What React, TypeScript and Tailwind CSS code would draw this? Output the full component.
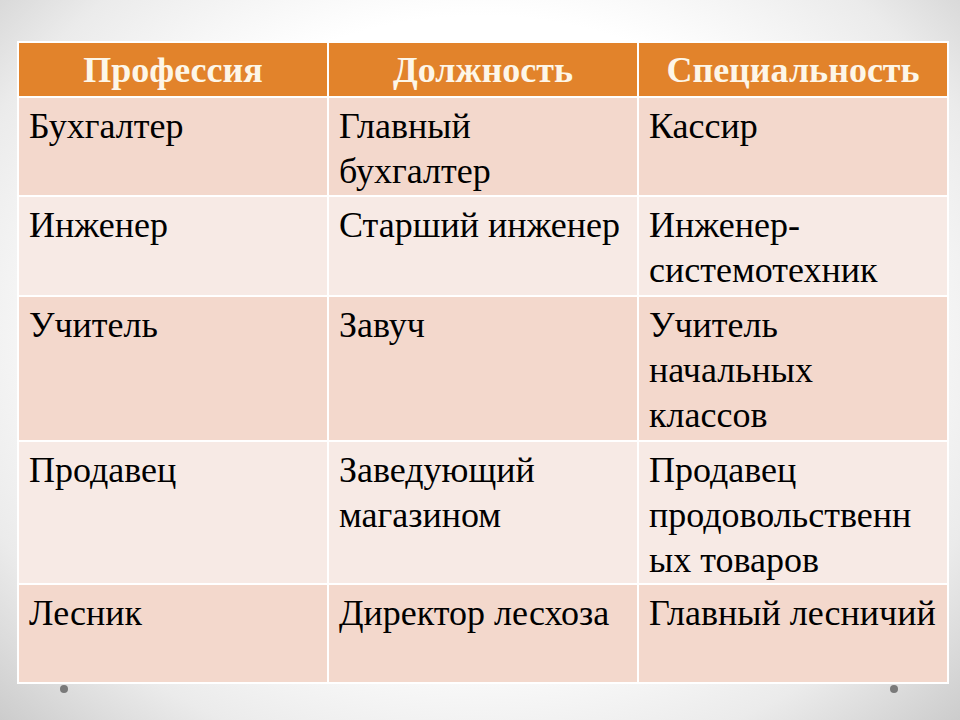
const rows: { cells: string[][]; h: number }[] = [
  { cells: [["Бухгалтер"], ["Главный", "бухгалтер"], ["Кассир"]], h: 99 },
  { cells: [["Инженер"], ["Старший инженер"], ["Инженер-", "системотехник"]], h: 100 },
  { cells: [["Учитель"], ["Завуч"], ["Учитель", "начальных", "классов"]], h: 145 },
  { cells: [["Продавец"], ["Заведующий", "магазином"], ["Продавец", "продовольственн", "ых товаров"]], h: 143 },
  { cells: [["Лесник"], ["Директор лесхоза"], ["Главный лесничий"]], h: 99 },
];

const headers = ["Профессия", "Должность", "Специальность"];

export default function App() {
  return (
    <div
      className="w-[960px] h-[720px] overflow-hidden pt-[41px] pl-[17px] bg-[radial-gradient(ellipse_at_50%_45%,#ffffff_55%,#ebebeb_80%,#cccccc_100%)]"
      style={{ fontFamily: '"Liberation Serif", "Times New Roman", serif' }}
    >
      <table className="border-collapse border-2 border-white w-[932px] table-fixed">
        <thead>
          <tr className="h-[55px] bg-[#e2832b]">
            {headers.map((h) => (
              <th key={h} className="border-2 border-white text-[#fdf6e8] text-[36px] leading-[40px] font-bold text-center align-middle p-0 pt-[1px]">
                {h}
              </th>
            ))}
          </tr>
        </thead>
        <tbody>
          {rows.map((r, i) => (
            <tr
              key={i}
              className={i % 2 === 0 ? "bg-[#f3d8cc]" : "bg-[#f7eae5]"}
              style={{ height: r.h }}
            >
              {r.cells.map((c, j) => (
                <td key={j} className="border-2 border-white align-top pl-[10px] pr-0 pt-[6px] text-[36px] leading-[45px] text-black">
                  {c.map((line, k) => (
                    <div key={k} className="whitespace-nowrap">{line}</div>
                  ))}
                </td>
              ))}
            </tr>
          ))}
        </tbody>
      </table>
      <div className="flex justify-between w-[838px] ml-[43px] mt-[1px]">
        <div className="w-[8px] h-[8px] rounded-full bg-[#7a7a7a]" />
        <div className="w-[8px] h-[8px] rounded-full bg-[#7a7a7a]" />
      </div>
    </div>
  );
}
